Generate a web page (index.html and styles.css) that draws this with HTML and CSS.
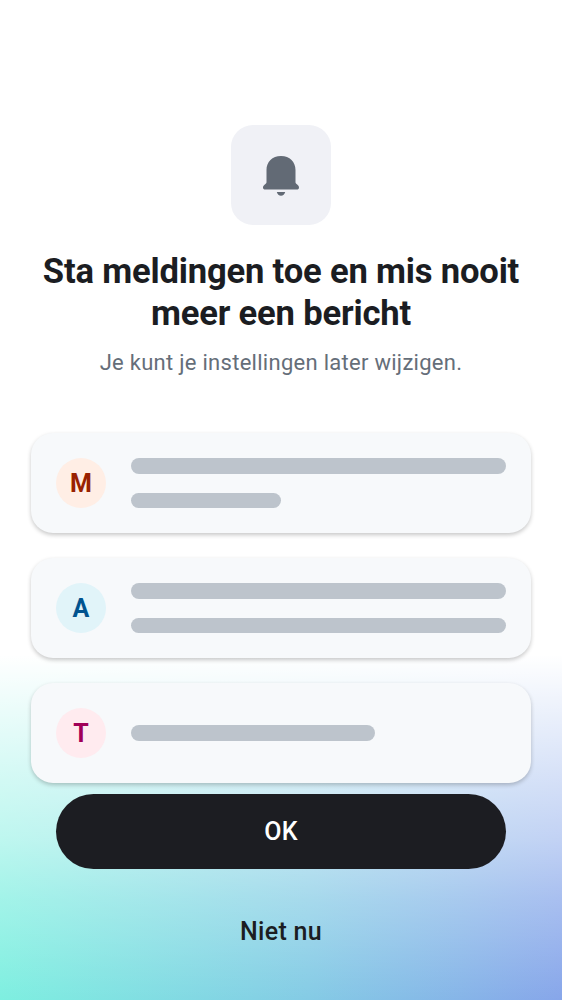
FILE: index.html
```html
<!DOCTYPE html>
<html lang="nl">
<head>
<meta charset="utf-8">
<title>Meldingen</title>
<link rel="stylesheet" href="styles.css">
</head>
<body>
<main class="screen">
  <div class="bell-tile">
    <svg class="bell" viewBox="0 0 40 42" aria-hidden="true">
      <path d="M20 2C11.200 2 5.500 8 5.500 16v12c0 1-.5 1.600-1.400 2.300C2.900 31.200 2 32.200 2 33.400 2 34.800 2.900 35.600 4.200 35.600h31.600c1.300 0 2.200-.8 2.200-2.200 0-1.200-.9-2.200-2.100-3.100-.9-.7-1.400-1.300-1.400-2.300V16C34.500 8 28.800 2 20 2Z"/>
      <path d="M15.800 38h8.400c-.6 2.200-2.100 3.700-4.200 3.700s-3.600-1.500-4.200-3.700Z"/>
    </svg>
  </div>
  <h1 class="title">Sta meldingen toe en mis nooit<br>meer een bericht</h1>
  <p class="subtitle">Je kunt je instellingen later wijzigen.</p>
  <section class="cards">
    <div class="card"><span class="avatar avatar-m">M</span><div class="lines"><i class="line"></i><i class="line line-short"></i></div></div>
    <div class="card"><span class="avatar avatar-a">A</span><div class="lines"><i class="line"></i><i class="line"></i></div></div>
    <div class="card"><span class="avatar avatar-t">T</span><div class="lines"><i class="line line-medium"></i></div></div>
  </section>
  <button class="ok">OK</button>
  <button class="later">Niet nu</button>
</main>
</body>
</html>
```
FILE: styles.css
```css
* { box-sizing: border-box; }
body { margin: 0; font-family: Roboto, sans-serif; color: #1b1d22; }
.screen {
  height: 1000px;
  padding: 125px 31px 0;
  overflow: hidden;
  display: flex;
  flex-direction: column;
  align-items: center;
  background:
    linear-gradient(to bottom, #fff 655px, rgba(255,255,255,.87) 700px, rgba(255,255,255,.65) 780px, rgba(255,255,255,.49) 840px, rgba(255,255,255,.28) 900px, rgba(255,255,255,0) 1000px),
    linear-gradient(to right, #7eefe0, #84cbe5 55%, #87a6ea);
}
.bell-tile {
  width: 100px; height: 100px; flex: none;
  border-radius: 22px; background: #f0f1f6;
  display: flex; align-items: center; justify-content: center;
}
.bell { width: 40px; height: 42px; fill: #626a75; }
.title {
  margin: 25px 0 0; font-size: 34.600px; line-height: 42px; font-weight: 700;
  letter-spacing: -.18px; text-align: center; white-space: nowrap;
}
.subtitle {
  margin: 13px 0 0; font-size: 22px; line-height: 31px; letter-spacing: .28px;
  color: #656e79; white-space: nowrap;
}
.cards { align-self: stretch; margin-top: 55px; display: flex; flex-direction: column; gap: 25px; }
.card {
  height: 100px; padding: 0 25px; border-radius: 22px; background: #f7f9fb;
  display: flex; align-items: center; gap: 25px;
  box-shadow: 0 2px 4px rgba(0,0,0,.22);
}
.avatar {
  width: 50px; height: 50px; flex: none; border-radius: 50%;
  display: flex; align-items: center; justify-content: center;
  font-size: 25px; font-weight: 700;
}
.avatar-m { background: #ffeee5; color: #992100; }
.avatar-a { background: #e1f4f9; color: #00538f; }
.avatar-t { background: #ffebef; color: #a10057; }
.lines { flex: 1; display: flex; flex-direction: column; gap: 19px; }
.line { display: block; height: 15.500px; border-radius: 8px; background: #bdc4cc; }
.line-short { width: 150px; }
.line-medium { width: 244px; }
.ok, .later {
  border: 0; width: 450px; height: 75px; flex: none; border-radius: 38px;
  font: 500 25px/30px Roboto, sans-serif; letter-spacing: .3px; padding: 0;
}
.ok { margin-top: 11px; background: #1c1d22; color: #fff; }
.later { margin-top: 25px; background: transparent; color: #1b1d22; }
```
